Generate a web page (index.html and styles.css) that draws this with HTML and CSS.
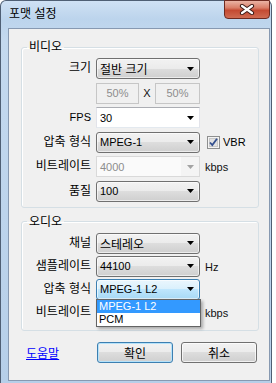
FILE: index.html
```html
<html>
   <head>
      <title>포맷 설정</title>
      <meta charset="utf-8">
      <link rel="stylesheet" href="styles.css">
   </head>
   <body>
      <div class="window">
         <div class="titlebar">
            <span class="title">포맷 설정</span>
            <div class="close">
               <svg width="16" height="11" viewBox="0 0 16 11">
                  <path d="M3 2l10 7M13 2L3 9" stroke="#3b1a16" stroke-width="4.2" stroke-linecap="round"></path>
                  <path d="M3 2l10 7M13 2L3 9" stroke="#fff" stroke-width="2.2" stroke-linecap="round"></path>
               </svg>
            </div>
         </div>
         <div class="client">
            <fieldset class="group video">
               <legend>비디오</legend>
               <div class="rows">
                  <span class="lab">크기</span>
                  <div class="combo">절반 크기<svg class="arrow" width="7" height="4"><polygon points="0,0 7,0 3.5,4"></polygon></svg></div>
                  <span></span>

                  <span></span>
                  <div class="sizes">
                     <span class="field en">50%</span>
                     <span class="x en">X</span>
                     <span class="field en">50%</span>
                  </div>
                  <span></span>

                  <span class="lab en">FPS</span>
                  <div class="combo edit en">30<svg class="arrow" width="7" height="4"><polygon points="0,0 7,0 3.5,4"></polygon></svg></div>
                  <span></span>

                  <span class="lab">압축 형식</span>
                  <div class="combo en">MPEG-1<svg class="arrow" width="7" height="4"><polygon points="0,0 7,0 3.5,4"></polygon></svg></div>
                  <label class="check en">
                     <svg width="13" height="13" viewBox="0 0 13 13">
                        <rect x="0.5" y="0.5" width="12" height="12" fill="#f4f4f4" stroke="#8e8f8f"></rect>
                        <rect x="2.5" y="2.5" width="8" height="8" fill="#e2e2e2" stroke="#c8c8c8"></rect>
                        <path d="M3 6.5l2.3 2.6L10 2.8" fill="none" stroke="#34508f" stroke-width="1.8"></path>
                     </svg>VBR
                  </label>

                  <span class="lab">비트레이트</span>
                  <div class="combo edit off en">4000<svg class="arrow" width="7" height="4"><polygon points="0,0 7,0 3.5,4"></polygon></svg></div>
                  <span class="unit en">kbps</span>

                  <span class="lab">품질</span>
                  <div class="combo en">100<svg class="arrow" width="7" height="4"><polygon points="0,0 7,0 3.5,4"></polygon></svg></div>
                  <span></span>
               </div>
            </fieldset>

            <fieldset class="group audio">
               <legend>오디오</legend>
               <div class="rows">
                  <span class="lab">채널</span>
                  <div class="combo">스테레오<svg class="arrow" width="7" height="4"><polygon points="0,0 7,0 3.5,4"></polygon></svg></div>
                  <span></span>

                  <span class="lab">샘플레이트</span>
                  <div class="combo en">44100<svg class="arrow" width="7" height="4"><polygon points="0,0 7,0 3.5,4"></polygon></svg></div>
                  <span class="unit en">Hz</span>

                  <span class="lab">압축 형식</span>
                  <div class="combo focus en">MPEG-1 L2<svg class="arrow" width="7" height="4"><polygon points="0,0 7,0 3.5,4"></polygon></svg>
                     <div class="list">
                        <div class="item sel">MPEG-1 L2</div>
                        <div class="item">PCM</div>
                     </div>
                  </div>
                  <span></span>

                  <span class="lab">비트레이트</span>
                  <span></span>
                  <span class="unit en">kbps</span>
               </div>
            </fieldset>

            <div class="buttons">
               <a class="help" href="#">도움말</a>
               <button class="btn default">확인</button>
               <button class="btn">취소</button>
            </div>
         </div>
      </div>
   </body>
</html>
```

FILE: styles.css
```css
*{
    box-sizing: border-box;
}
body{
    margin: 0;
    background: #fff;
    font-family: "Liberation Sans", "Noto Sans CJK KR", sans-serif;
    font-size: 12px;
    color: #000;
}
.en{
    font-size: 11px;
}
.window{
    width: 272px;
    height: 383px;
    border: 1px solid #4f5f74;
    border-bottom: 0;
    border-radius: 6px 6px 0 0;
    background: linear-gradient(180deg, #cfe1f4 0, #bcd4ec 18px, #c4d9ef 40px, #b6cfe9 100%);
    display: flex;
    flex-direction: column;
}
.titlebar{
    height: 27px;
    display: flex;
    align-items: flex-start;
}
.title{
    padding: 6px 0 0 8px;
    line-height: 14px;
}
.close{
    margin-left: auto;
    margin-right: 1px;
    margin-top: -1px;
    width: 46px;
    height: 19px;
    border: 1px solid #6e2a20;
    border-radius: 0 0 4px 4px;
    background: linear-gradient(180deg, #eab3a4 0, #d97e68 40%, #c44a32 55%, #cf6b52 100%);
    display: flex;
    align-items: center;
    justify-content: center;
}
.client{
    flex: 1;
    margin: 0 1px 2px 7px;
    background: #f0f0f0;
    border: 1px solid #8799b1;
    padding: 0 10px 0 12px;
}

/* group boxes */
.group{
    margin: 11px 0 0 0;
    padding: 0 0 5px 0;
    border: 1px solid #d5dfe5;
    border-radius: 3px;
    box-shadow: inset 1px 1px #fff;
}
.group legend{
    margin-left: 5px;
    padding: 0 2px;
    line-height: 14px;
}
.audio{
    margin-top: 7px;
    padding-bottom: 7px;
}
.rows{
    display: grid;
    grid-template-columns: 69px 104px auto;
    grid-auto-rows: 21px;
    column-gap: 5px;
    row-gap: 3.5px;
    padding-top: 4px;
}
.audio .rows{
    row-gap: 2px;
}
.lab{
    text-align: right;
    line-height: 20px;
    white-space: nowrap;
}
.unit{
    line-height: 22px;
    color: #111;
}

/* combo boxes */
.combo{
    position: relative;
    display: flex;
    align-items: center;
    padding-left: 3px;
    border: 1px solid #707070;
    border-radius: 3px;
    background: linear-gradient(180deg, #f2f2f2 0, #ebebeb 50%, #dddddd 50%, #cfcfcf 100%);
    box-shadow: inset 0 0 0 1px rgba(255,255,255,.6);
    white-space: nowrap;
}
.arrow{
    margin-left: auto;
    margin-right: 5px;
    fill: #000;
}
.combo.edit{
    border-radius: 0;
    border-color: #abadb3 #e2e3ea #e3e9ef #e2e3ea;
    background: #fff;
    box-shadow: none;
}
.combo.off{
    border-color: #d9d9d9;
    background: linear-gradient(90deg, #fafafa 0, #fafafa 84px, #f4f4f4 84px);
    color: #8d8d8d;
}
.combo.off .arrow{
    fill: #a3a3a3;
}
.combo.focus{
    border-color: #3c7fb1;
    background: linear-gradient(180deg, #eaf6fd 0, #d9f0fc 50%, #bee6fd 50%, #a7d9f5 100%);
}
.list{
    position: absolute;
    top: 100%;
    left: -1px;
    width: 105px;
    border: 1px solid #646464;
    background: #fff;
    box-shadow: 2px 2px 3px rgba(0,0,0,.3);
    z-index: 2;
}
.item{
    height: 13px;
    line-height: 13px;
    padding-left: 2px;
    color: #000;
}
.item.sel{
    background: #3399ff;
    color: #fff;
}

/* size fields */
.sizes{
    display: flex;
    align-items: stretch;
}
.field{
    width: 43px;
    border: 1px solid #c6c6c6;
    background: #f0f0f0;
    color: #8d8d8d;
    text-align: center;
    line-height: 18px;
}
.sizes .field:last-child{
    width: 45px;
}
.x{
    flex: 1;
    text-align: center;
    line-height: 20px;
    color: #111;
}

/* checkbox */
.check{
    display: flex;
    align-items: center;
    gap: 3px;
    padding-left: 2px;
}

/* bottom buttons */
.buttons{
    display: flex;
    align-items: center;
    margin-top: 11px;
    padding-right: 2px;
}
.help{
    margin-left: 5px;
    margin-right: auto;
    color: #0000ff;
    text-decoration: underline;
}
.btn{
    width: 76px;
    height: 21px;
    margin-left: 8px;
    padding: 0;
    font-family: "Liberation Sans", "Noto Sans CJK KR", sans-serif;
    font-size: 12px;
    color: #000;
    border: 1px solid #707070;
    border-radius: 3px;
    background: linear-gradient(180deg, #f2f2f2 0, #ebebeb 50%, #dddddd 50%, #cfcfcf 100%);
    box-shadow: inset 0 0 0 1px rgba(255,255,255,.7);
}
.btn.default{
    border-color: #3c7fb1;
    box-shadow: inset 0 0 0 1px #b5e2fa;
}
```
